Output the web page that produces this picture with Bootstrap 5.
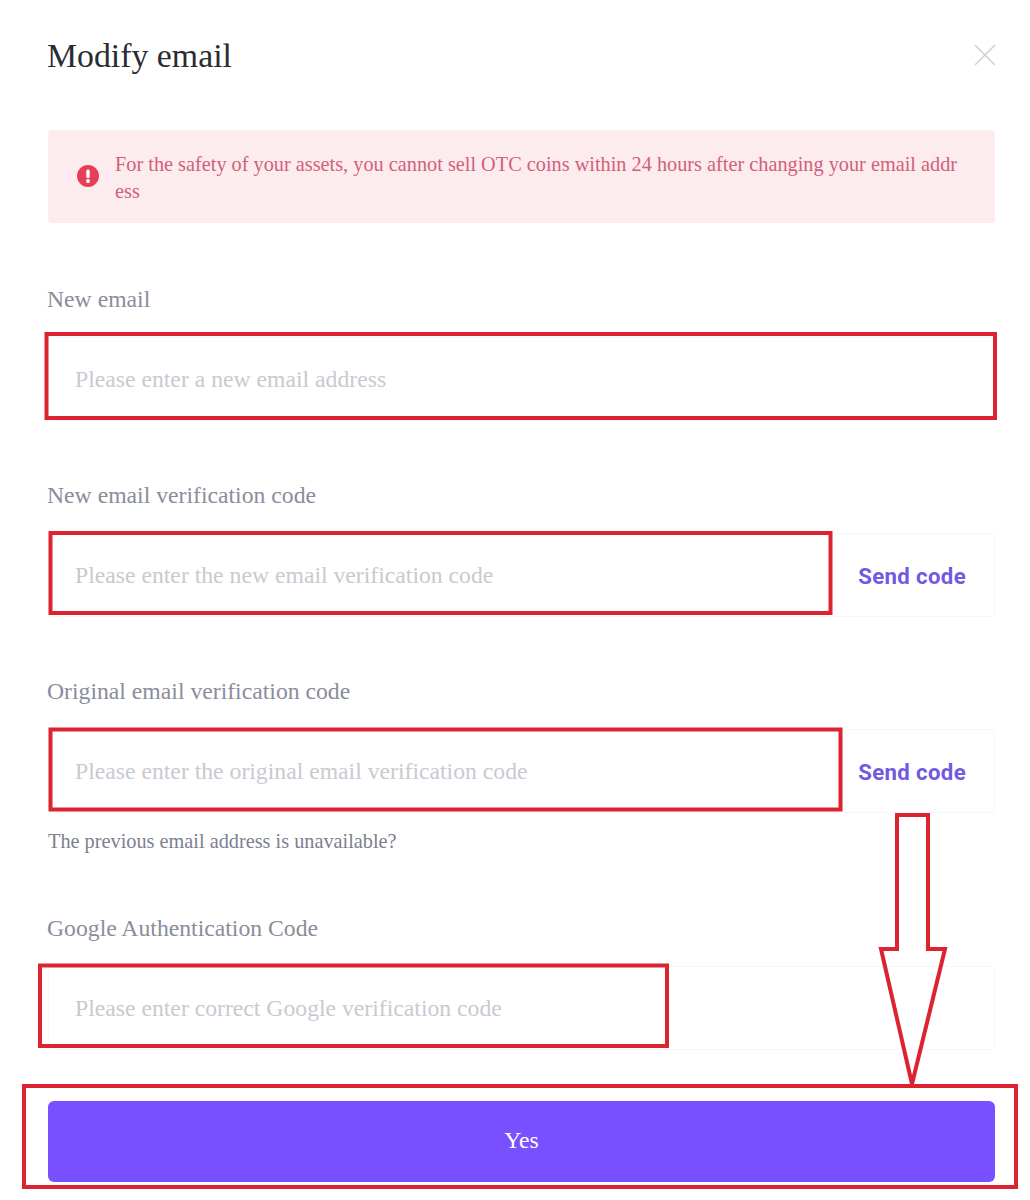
<!DOCTYPE html>
<html lang="en">
<head>
<meta charset="utf-8">
<title>Modify email</title>
<link href="https://cdn.jsdelivr.net/npm/bootstrap@5.3.0/dist/css/bootstrap.min.css" rel="stylesheet">
<style>
html, body { background: #fff; }
body { font-family: "Liberation Serif", serif; width: 1030px; height: 1200px; overflow: hidden; position: relative; }
.sheet { padding: 0 35px 0 48px; }
.top-bar { height: 130px; padding-top: 34px; }
.dlg-title { font-size: 33.8px; line-height: 44px; color: #2a2c33; margin: 0 0 0 -1px; font-weight: 400; font-family: inherit; }
.x-btn { width: 22px; height: 22px; margin: 10px -1px 0 0; }
.warn-box { height: 93px; background: #fcecee; border: 0; border-radius: 4px; color: #d2607a; font-size: 20.3px; line-height: 27px; padding: 21px 32px 0 29px; margin: 0 0 61px; gap: 16px; }
.warn-box svg { flex: none; width: 22px; height: 22px; margin-top: 14px; }
.warn-text { word-break: break-all; min-width: 0; }
.fld { margin-bottom: 59px; }
.fld-label { display: block; font-size: 23.7px; line-height: 30px; color: #8a8d9b; margin: 0 0 23px -1px; }
.fld-input { height: 84px; border: 1px solid #f7f7f9; border-radius: 4px; padding: 0 26px; font-size: 23.7px; font-family: inherit; color: #2a2c33; background: #fff; }
.fld-input::placeholder { color: #c8cad1; opacity: 1; }
.code-btn { flex: none; width: 165px; height: 84px; background: #fff; border: 1px solid #f7f7f9; border-left: 0; border-radius: 0 4px 4px 0; color: #7259e0; font-family: "Roboto", sans-serif; font-weight: 700; font-size: 22.2px; letter-spacing: .35px; padding: 3px 28px 0 0; text-align: right; white-space: nowrap; }
.fld-help { font-size: 20.3px; line-height: 26px; color: #7d8090; margin: 15px 0 0; }
.go-btn { height: 81px; background: #7950ff; border: 0; border-radius: 6px; color: #fff; font-size: 23.7px; font-family: inherit; margin-top: -8px; padding-bottom: 8px; }
.mark-layer { position: absolute; left: 0; top: 0; width: 1030px; height: 1200px; pointer-events: none; }
</style>
</head>
<body>
<div class="sheet">
  <div class="top-bar d-flex justify-content-between align-items-start">
    <h1 class="dlg-title">Modify email</h1>
    <svg class="x-btn" viewBox="0 0 22 22" aria-label="Close"><path d="M1 1 21 21M21 1 1 21" stroke="#cfd1d6" stroke-width="1.6" fill="none"/></svg>
  </div>
  <div class="alert warn-box d-flex align-items-start">
    <svg viewBox="0 0 22 22"><circle cx="11" cy="11" r="11" fill="#e4405a"/><rect x="9.3" y="4.5" width="3.4" height="8.6" rx="1.6" fill="#fff"/><circle cx="11" cy="16" r="1.9" fill="#fff"/></svg>
    <div class="warn-text">For the safety of your assets, you cannot sell OTC coins within 24 hours after changing your email address</div>
  </div>
  <div class="fld">
    <label class="fld-label">New email</label>
    <input class="form-control fld-input" type="text" placeholder="Please enter a new email address">
  </div>
  <div class="fld">
    <label class="fld-label">New email verification code</label>
    <div class="d-flex">
      <input class="form-control fld-input rounded-end-0 border-end-0" type="text" placeholder="Please enter the new email verification code">
      <button class="btn code-btn" type="button">Send code</button>
    </div>
  </div>
  <div class="fld">
    <label class="fld-label">Original email verification code</label>
    <div class="d-flex">
      <input class="form-control fld-input rounded-end-0 border-end-0" type="text" placeholder="Please enter the original email verification code">
      <button class="btn code-btn" type="button">Send code</button>
    </div>
    <div class="fld-help">The previous email address is unavailable?</div>
  </div>
  <div class="fld">
    <label class="fld-label">Google Authentication Code</label>
    <input class="form-control fld-input" type="text" placeholder="Please enter correct Google verification code">
  </div>
  <button class="btn go-btn w-100" type="button">Yes</button>
</div>
<svg class="mark-layer" viewBox="0 0 1030 1200" fill="none" stroke="#dc2430" stroke-width="4">
  <rect x="46.500" y="334" width="948.500" height="84"/>
  <rect x="50.500" y="533" width="780" height="80"/>
  <rect x="50.500" y="729.500" width="790" height="80"/>
  <rect x="40" y="965.500" width="627" height="80.500"/>
  <rect x="24" y="1086" width="992" height="101"/>
  <path stroke-linejoin="miter" d="M897 815H928V949H945L912 1084 881 949H897Z"/>
</svg>
<script src="https://cdn.jsdelivr.net/npm/bootstrap@5.3.0/dist/js/bootstrap.bundle.min.js"></script>
</body>
</html>
